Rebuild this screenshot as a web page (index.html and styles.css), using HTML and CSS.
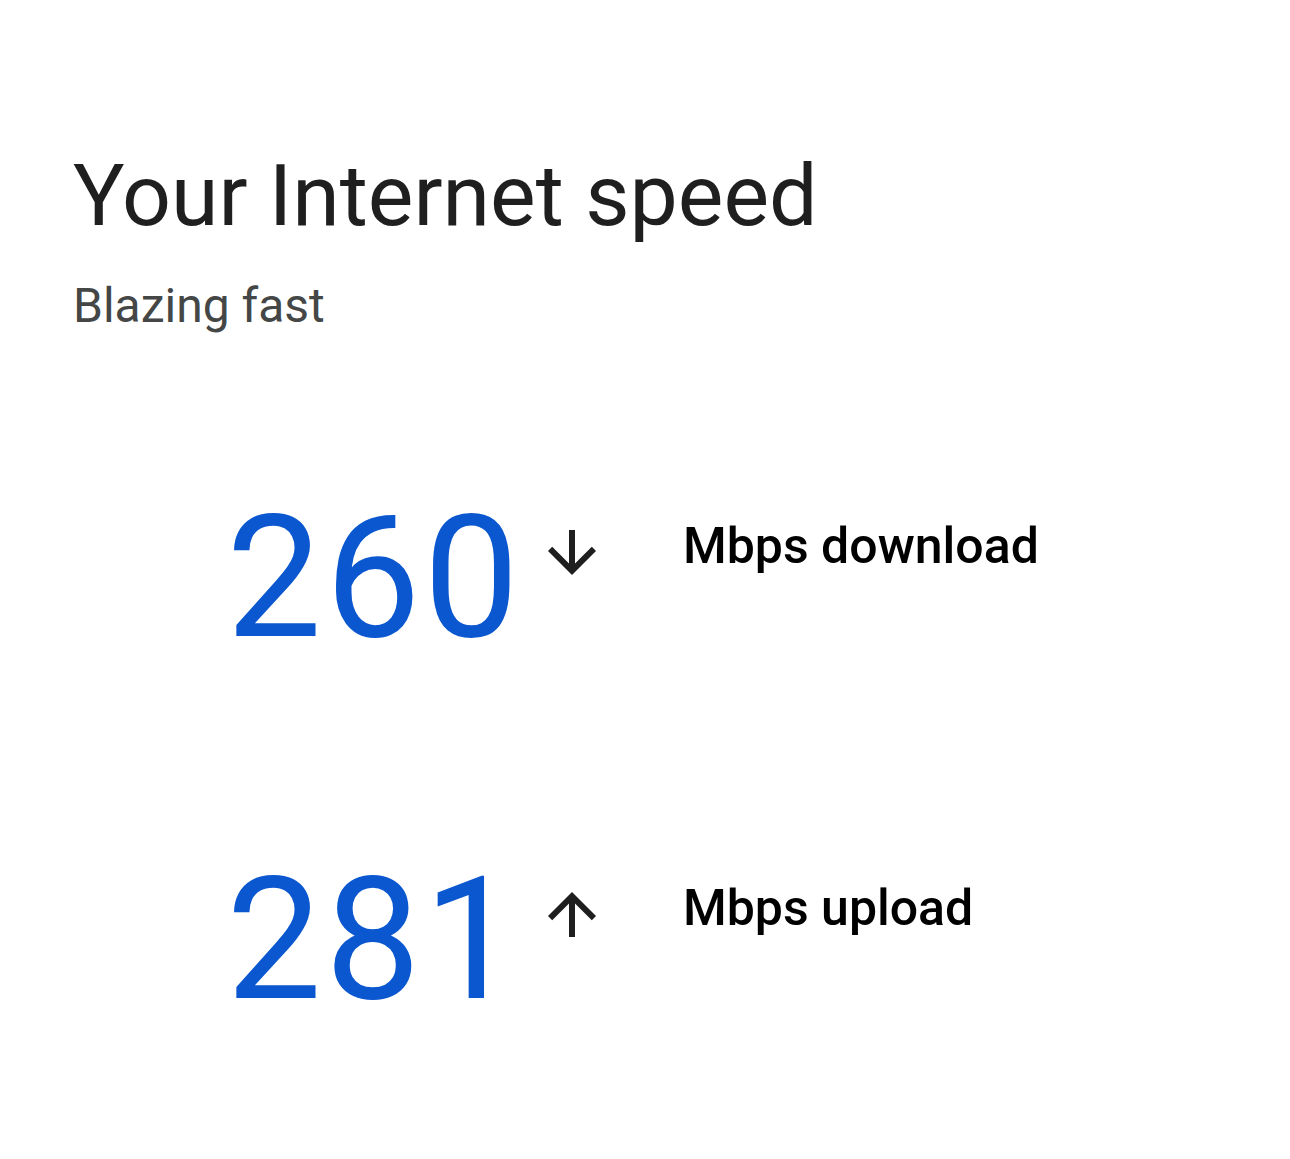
FILE: index.html
```html
<!DOCTYPE html>
<html lang="en">
<head>
  <meta charset="UTF-8" />
  <meta name="viewport" content="width=device-width, initial-scale=1" />
  <title>Internet speed test</title>
  <link rel="stylesheet" href="styles.css">
</head>
<body>

  <div class="speed-card">
    <h1 class="titulo">Your Internet speed</h1>
    <p class="subtitulo">Blazing fast</p>

    <div class="resultados">
      <div class="fila">
        <span class="valor">260</span>
        <svg class="flecha" viewBox="0 -960 960 960" aria-hidden="true">
          <path d="M480-160 160-480l56-56 224 224v-448h80v448l224-224 56 56-320 320Z"/>
        </svg>
        <span class="etiqueta">Mbps download</span>
      </div>

      <div class="fila">
        <span class="valor">281</span>
        <svg class="flecha" viewBox="0 -960 960 960" aria-hidden="true">
          <path d="M440-160v-448L216-384l-56-56 320-320 320 320-56 56-224-224v448h-80Z"/>
        </svg>
        <span class="etiqueta">Mbps upload</span>
      </div>
    </div>
  </div>

</body>
</html>
```

FILE: styles.css
```css
* { box-sizing: border-box; }
body {
  font-family: Roboto, 'Noto Sans', sans-serif;
  background: #fff;
  margin: 0;
}

.speed-card {
  padding: 153px 73px 0;
}

.titulo {
  margin: 0;
  font-size: 86px;
  line-height: 1;
  font-weight: 400;
  color: #1f1f1f;
}

.subtitulo {
  margin: 43px 0 0;
  font-size: 48px;
  line-height: 1;
  color: #444746;
}

.resultados {
  margin-top: 163px;
  display: flex;
  flex-direction: column;
  gap: 192px;
}

.fila {
  display: flex;
  align-items: flex-start;
}

.valor {
  width: 449px;
  text-align: right;
  font-size: 170px;
  line-height: 1;
  letter-spacing: 3px;
  color: #0b57d0;
}

.flecha {
  width: 72px;
  height: 72px;
  margin: 22px 0 0 14px;
  fill: #1f1f1f;
  flex-shrink: 0;
}

.etiqueta {
  margin: 28px 0 0 75px;
  font-size: 50px;
  line-height: 1;
  font-weight: 500;
  color: #000;
}
```
